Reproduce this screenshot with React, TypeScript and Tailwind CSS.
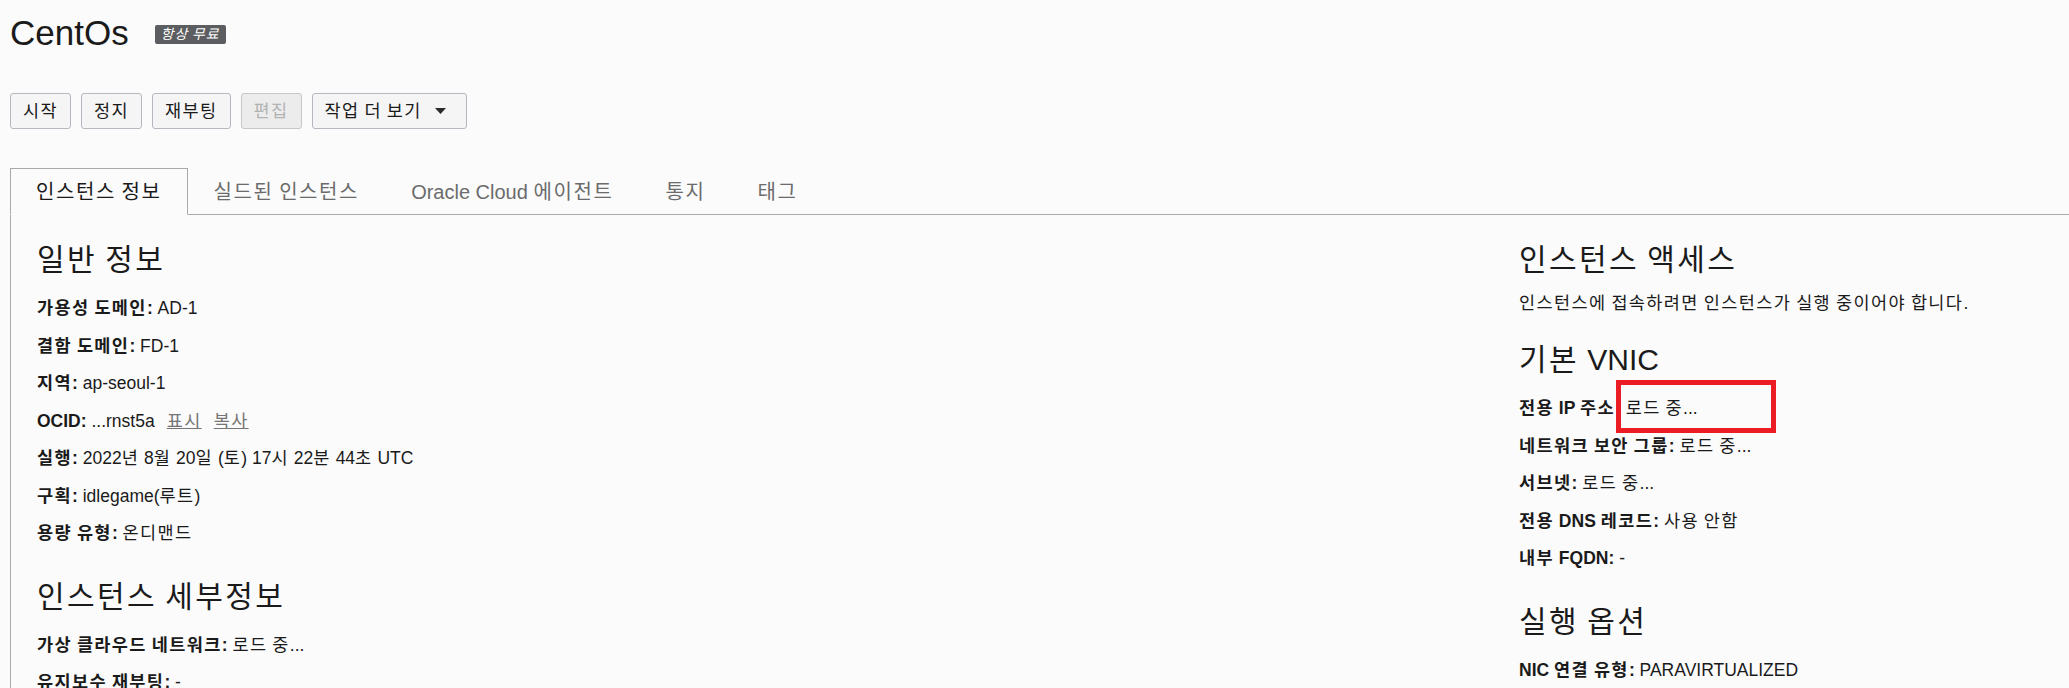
import { ReactNode } from 'react';

// Hangul runs get a bit of tracking so they take the width of the reference font
const HANGUL = /([\u3131-\u318E\uAC00-\uD7A3]+)/;

function K({ text }: { text: string }) {
    return (
        <>
            {text.split(HANGUL).map((part, i) =>
                i % 2 === 1 ? (
                    <span key={i} className="tracking-[0.08em]">
                        {part}
                    </span>
                ) : (
                    part
                )
            )}
        </>
    );
}

type Row = { label: string; value?: ReactNode };

const general: Row[] = [
    { label: '가용성 도메인', value: 'AD-1' },
    { label: '결함 도메인', value: 'FD-1' },
    { label: '지역', value: 'ap-seoul-1' },
    {
        label: 'OCID',
        value: (
            <>
                ...rnst5a
                <a className="ml-[12px] text-[#757575] underline">
                    <K text="표시" />
                </a>
                <a className="ml-[12px] text-[#757575] underline">
                    <K text="복사" />
                </a>
            </>
        ),
    },
    { label: '실행', value: '2022년 8월 20일 (토) 17시 22분 44초 UTC' },
    { label: '구획', value: 'idlegame(루트)' },
    { label: '용량 유형', value: '온디맨드' },
];

const details: Row[] = [
    { label: '가상 클라우드 네트워크', value: '로드 중...' },
    { label: '유지보수 재부팅', value: '-' },
];

const vnic: Row[] = [
    { label: '네트워크 보안 그룹', value: '로드 중...' },
    { label: '서브넷', value: '로드 중...' },
    { label: '전용 DNS 레코드', value: '사용 안함' },
    { label: '내부 FQDN', value: '-' },
];

const launch: Row[] = [{ label: 'NIC 연결 유형', value: 'PARAVIRTUALIZED' }];

const tabs = ['인스턴스 정보', '실드된 인스턴스', 'Oracle Cloud 에이전트', '통지', '태그'];

function Heading({ text, first }: { text: string; first?: boolean }) {
    return (
        <h2 className={first ? 'text-[30px] leading-[36px] mb-[12px]' : 'text-[30px] leading-[36px] mb-[12px] mt-[26px]'}>
            <K text={text} />
        </h2>
    );
}

function Field({ row }: { row: Row }) {
    return (
        <div className="leading-[37.5px] whitespace-nowrap">
            <span className="font-bold">
                <K text={row.label} />:
            </span>{' '}
            {typeof row.value === 'string' ? <K text={row.value} /> : row.value}
        </div>
    );
}

function Button({ text, disabled, children }: { text: string; disabled?: boolean; children?: ReactNode }) {
    return (
        <button
            className={
                disabled
                    ? 'h-[36px] px-[12px] rounded-[3px] border border-[#c4c7cc] bg-[#ececec] text-[#b3b3b3] flex items-center'
                    : 'h-[36px] px-[12px] rounded-[3px] border border-[#b4b8bf] bg-[#f5f5f6] text-[#1a1a1a] flex items-center'
            }
        >
            <span className="whitespace-pre">
                <K text={text} />
            </span>
            {children}
        </button>
    );
}

export default function App() {
    return (
        <div className="h-[688px] overflow-hidden bg-[#fbfbfb] text-[#1a1a1a] text-[17.5px] font-['Liberation_Sans','Noto_Sans_CJK_KR',sans-serif]">
            <div className="pl-[10px] pt-[13px]">
                <div className="flex items-center">
                    <h1 className="text-[35px] leading-[40px]">CentOs</h1>
                    <span className="ml-[26px] mt-[3px] h-[19px] px-[6px] rounded-[2px] bg-[#5b5d60] text-white italic text-[13.75px] leading-[19px]">
                        <K text="항상 무료" />
                    </span>
                </div>

                <div className="mt-[40px] flex gap-[10px]">
                    <Button text="시작" />
                    <Button text="정지" />
                    <Button text="재부팅" />
                    <Button text="편집" disabled />
                    <Button text="작업 더 보기">
                        <svg className="ml-[13px] mr-[8px]" width="11" height="6" viewBox="0 0 11 6">
                            <path d="M0 0h11L5.5 6z" fill="#2a2a2a" />
                        </svg>
                    </Button>
                </div>

                <div className="mt-[39px] flex border-b border-[#a9a9a9] text-[20px]">
                    {tabs.map((t, i) => (
                        <div
                            key={t}
                            className={
                                i === 0
                                    ? 'h-[47px] -mb-px px-[25px] flex items-center border border-[#a9a9a9] border-b-[#fbfbfb] text-[#1a1a1a]'
                                    : 'h-[47px] -mb-px px-[25px] flex items-center border border-transparent text-[#6b6b6b]'
                            }
                        >
                            <span>
                                <K text={t} />
                            </span>
                        </div>
                    ))}
                </div>

                <div className="flex border-l border-[#a9a9a9] pl-[26px] pt-[27px]">
                    <div className="w-[1482px]">
                        <Heading first text="일반 정보" />
                        {general.map((r) => (
                            <Field key={r.label} row={r} />
                        ))}
                        <Heading text="인스턴스 세부정보" />
                        {details.map((r) => (
                            <Field key={r.label} row={r} />
                        ))}
                    </div>

                    <div className="flex-1">
                        <Heading first text="인스턴스 액세스" />
                        <p className="leading-[26px]">
                            <K text="인스턴스에 접속하려면 인스턴스가 실행 중이어야 합니다." />
                        </p>
                        <Heading text="기본 VNIC" />
                        <div className="leading-[37.5px] whitespace-nowrap">
                            <span className="font-bold">
                                <K text="전용 IP 주소" />:
                            </span>{' '}
                            <span className="relative">
                                <K text="로드 중..." />
                                <span className="absolute left-[-10px] top-1/2 -mt-[28px] w-[160px] h-[53px] border-[5px] border-[#ec1c24]" />
                            </span>
                        </div>
                        {vnic.map((r) => (
                            <Field key={r.label} row={r} />
                        ))}
                        <Heading text="실행 옵션" />
                        {launch.map((r) => (
                            <Field key={r.label} row={r} />
                        ))}
                    </div>
                </div>
            </div>
        </div>
    );
}
